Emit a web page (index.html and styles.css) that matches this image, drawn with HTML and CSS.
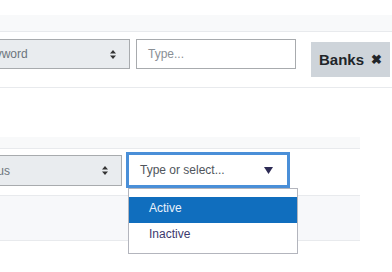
FILE: index.html
```html
<!DOCTYPE html>
<html lang="en">
<head>
  <meta charset="UTF-8">
  <title>Filters</title>
  <meta name="viewport" content="width=device-width, initial-scale=1">
  <link rel="stylesheet" href="styles.css">
</head>
<body>

<!-- Keyword filter -->
<div class="panel">
  <div class="panel-head"></div>
  <div class="filters filters-top">
    <div class="select select-keyword">
      <span>Keyword</span>
      <svg class="sort" width="6" height="9" viewBox="0 0 6 9"><path d="M3 0L6 3.5H0Z M3 9L6 5.5H0Z" fill="#333"/></svg>
    </div>
    <div class="input">Type...</div>
    <div class="badge">Banks <span class="close">&#10006;</span></div>
  </div>
</div>

<!-- Status filter -->
<div class="panel panel-status">
  <div class="panel-head panel-head-sm"></div>
  <div class="filters filters-status">
    <div class="select select-status">
      <span>Status</span>
      <svg class="sort" width="6" height="9" viewBox="0 0 6 9"><path d="M3 0L6 3.5H0Z M3 9L6 5.5H0Z" fill="#333"/></svg>
    </div>
    <div class="combo">
      <span>Type or select...</span>
      <svg width="9" height="7" viewBox="0 0 9 7"><path d="M0 0H9L4.5 7Z" fill="#2d2b55"/></svg>
      <ul class="menu">
        <li class="active">Active</li>
        <li>Inactive</li>
      </ul>
    </div>
  </div>
  <div class="row-band"></div>
</div>

</body>
</html>
```

FILE: styles.css
```css
* { box-sizing: border-box; margin: 0; padding: 0; }
html, body {
  background: #fff;
  overflow: hidden;
}
body {
  font-family: "Liberation Sans", Arial, sans-serif;
  font-size: 12px;
  min-height: 272px;
}

.panel {
  margin-top: 15px;
}

.panel-head {
  height: 17px;
  background: #f8f9fa;
  border-bottom: 1px solid #e8eaed;
}

.panel-head-sm {
  height: 12px;
}

.filters {
  display: flex;
  align-items: flex-start;
  border-bottom: 1px solid #e8eaed;
}

.filters-top {
  height: 56px;
  padding-top: 7px;
  margin-left: -32px;
  width: 440px;
}

.select {
  display: flex;
  align-items: center;
  justify-content: space-between;
  height: 30px;
  padding: 0 12px;
  background: #e9ecef;
  border: 1px solid #a8abae;
  color: #6c757d;
}

.select-keyword {
  width: 162px;
}

.sort {
  margin-right: 1px;
}

.input {
  display: flex;
  align-items: center;
  width: 160px;
  height: 30px;
  margin-left: 6px;
  padding: 0 11px;
  border: 1px solid #a8abae;
  color: #8a9096;
}

.badge {
  display: flex;
  align-items: center;
  height: 35px;
  margin: 3px 0 0 15px;
  padding: 0 8px;
  background: #ced4da;
  color: #212529;
  font-weight: bold;
  font-size: 15px;
  white-space: nowrap;
}

.close {
  margin-left: 7px;
  font-size: 13px;
}

.panel-status {
  margin-top: 49px;
  width: 360px;
}

.filters-status {
  height: 46px;
  padding-top: 6px;
  margin-left: -37px;
  border-bottom: none;
}

.select-status {
  width: 159px;
  height: 31px;
}

.combo {
  position: relative;
  display: flex;
  align-items: center;
  justify-content: space-between;
  width: 164px;
  height: 36px;
  margin: -3px 0 0 4px;
  padding: 0 14px 0 11px;
  border: 3px solid #4a8fd8;
  color: #50555c;
}

.menu {
  position: absolute;
  top: 33px;
  left: -1px;
  width: 170px;
  height: 66px;
  padding-top: 8px;
  list-style: none;
  background: #fff;
  border: 1px solid #b3b5bd;
  z-index: 2;
}

.menu li {
  height: 26px;
  line-height: 23px;
  padding-left: 20px;
  color: #3d3a6e;
}

.menu li.active {
  background: #106ebe;
  color: #e8f1fb;
}

.row-band {
  height: 46px;
  background: #f7f8fa;
  border-top: 1px solid #e8eaed;
  border-bottom: 1px solid #e8eaed;
}
```
